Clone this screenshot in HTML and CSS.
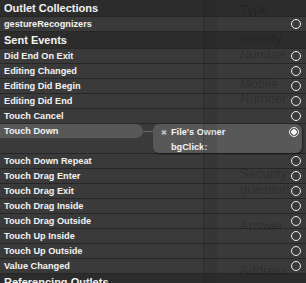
FILE: index.html
```html
<!DOCTYPE html>
<html lang="en">
<head>
  <meta charset="UTF-8">
  <title>Connections</title>
  <link rel="stylesheet" href="styles.css">
</head>
<body>

<div class="panel">
  <div class="head">Outlet Collections</div>
  <div class="row"><span>gestureRecognizers</span><i class="dot"></i></div>
  <div class="head">Sent Events</div>
  <div class="row"><span>Did End On Exit</span><i class="dot"></i></div>
  <div class="row"><span>Editing Changed</span><i class="dot"></i></div>
  <div class="row"><span>Editing Did Begin</span><i class="dot"></i></div>
  <div class="row"><span>Editing Did End</span><i class="dot"></i></div>
  <div class="row"><span>Touch Cancel</span><i class="dot"></i></div>
  <div class="row linked">
    <div class="pill">Touch Down</div>
    <div class="wire"></div>
    <div class="target">
      <div class="target-text">
        <div class="owner"><span class="x">&#x2716;</span>File's Owner</div>
        <div class="action">bgClick:</div>
      </div>
      <i class="dot full"></i>
    </div>
  </div>
  <div class="row"><span>Touch Down Repeat</span><i class="dot"></i></div>
  <div class="row"><span>Touch Drag Enter</span><i class="dot"></i></div>
  <div class="row"><span>Touch Drag Exit</span><i class="dot"></i></div>
  <div class="row"><span>Touch Drag Inside</span><i class="dot"></i></div>
  <div class="row"><span>Touch Drag Outside</span><i class="dot"></i></div>
  <div class="row"><span>Touch Up Inside</span><i class="dot"></i></div>
  <div class="row"><span>Touch Up Outside</span><i class="dot"></i></div>
  <div class="row"><span>Value Changed</span><i class="dot"></i></div>
  <div class="head">Referencing Outlets</div>
</div>

<!-- storyboard labels showing through the translucent panel -->
<div class="ghost">
  <div class="stripe"></div>
  <span style="top:2px">Type</span>
  <span style="top:31px">Identity</span>
  <span style="top:47px">Number</span>
  <span style="top:76px">Mobile</span>
  <span style="top:91px">Number</span>
  <span style="top:166px">Security</span>
  <span style="top:182px">question</span>
  <span style="top:218px">Answer</span>
  <span style="top:263px">Address</span>
</div>

</body>
</html>
```

FILE: styles.css
```css
body {
  margin: 0;
  background-color: #2a2a2a;
  font-family: "Liberation Sans", Arial, sans-serif;
  overflow: hidden;
}

.panel {
  width: 306px;
  color: #f4f4f4;
}

.head {
  height: 17px;
  box-sizing: border-box;
  padding: 1px 0 0 4px;
  background-color: #2c2c2c;
  border-bottom: 1px solid #262626;
  font-size: 11px;
  font-weight: bold;
  line-height: 15px;
}

.row {
  display: flex;
  align-items: center;
  justify-content: space-between;
  height: 15px;
  box-sizing: border-box;
  padding: 0 5px 0 4px;
  background-color: #3a3a3a;
  border-bottom: 1px solid #262626;
  font-size: 9.2px;
  font-weight: bold;
  line-height: 14px;
}

.dot {
  display: block;
  width: 8px;
  height: 8px;
  border: 1.5px solid #f0f0f0;
  border-radius: 50%;
}

.dot.full {
  background: radial-gradient(circle, #f4f4f4 0, #f4f4f4 2.5px, transparent 3px);
}

.row.linked {
  height: 30px;
  align-items: flex-start;
  justify-content: flex-start;
  padding: 0;
}

.pill {
  width: 143px;
  height: 14px;
  box-sizing: border-box;
  padding-left: 4px;
  background-color: #585858;
  border-radius: 0 7px 7px 0;
}

.wire {
  width: 10px;
  height: 1px;
  margin-top: 7px;
  background-color: #6a6a6a;
}

.target {
  display: flex;
  justify-content: space-between;
  width: 149px;
  height: 29px;
  box-sizing: border-box;
  padding: 1px 3px 0 8px;
  background-color: #585858;
  border-radius: 6px;
  box-shadow: 1px 1px 2px rgba(0, 0, 0, 0.5);
}

.target .dot {
  margin-top: 2px;
}

.owner .x {
  display: inline-block;
  width: 10px;
  font-size: 7px;
  color: #bdbdbd;
}

.action {
  padding-left: 10px;
}

.ghost {
  position: absolute;
  top: 0;
  left: 0;
  width: 306px;
  height: 283px;
  pointer-events: none;
}

.ghost .stripe {
  position: absolute;
  top: 0;
  left: 203px;
  width: 13px;
  height: 283px;
  background-color: rgba(20, 30, 40, 0.12);
  border-left: 1px solid rgba(20, 30, 45, 0.25);
}

.ghost span {
  position: absolute;
  left: 240px;
  font-size: 13px;
  line-height: 15px;
  color: rgba(0, 0, 0, 0.2);
}
```
